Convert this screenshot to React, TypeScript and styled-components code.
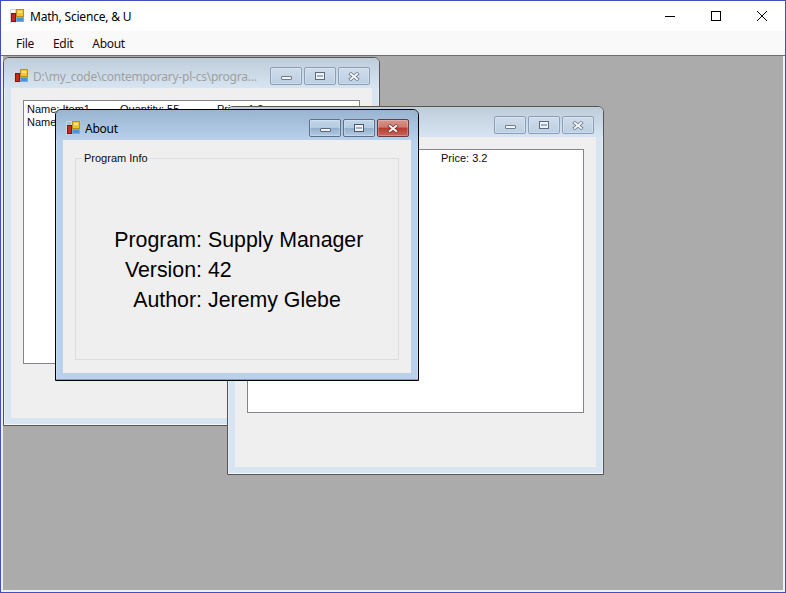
import React from "react";
import styled, { createGlobalStyle } from "styled-components";

const Global = createGlobalStyle`
  html, body { margin: 0; padding: 0; background: #fff; }
  * { box-sizing: border-box; }
`;

const uiFont = `"Noto Sans", "Open Sans", sans-serif`;

const MainWindow = styled.div`
  width: 786px;
  height: 593px;
  border: 1px solid #3f51c0;
  background: #fff;
  display: flex;
  flex-direction: column;
  overflow: hidden;
  font-family: ${uiFont};
  font-size: 12px;
  color: #000;
`;

const MainTitleBar = styled.div`
  height: 30px;
  flex: none;
  display: flex;
  align-items: center;
  padding-left: 8px;
  background: #fff;
`;

const MainTitle = styled.span`
  flex: 1;
  margin-left: 5px;
  font-size: 12px;
  letter-spacing: -0.2px;
`;

const CaptionButton = styled.div`
  width: 46px;
  height: 30px;
  display: flex;
  align-items: center;
  justify-content: center;
`;

const MenuBar = styled.div`
  height: 25px;
  flex: none;
  display: flex;
  align-items: center;
  background: #f9f9f9;
  padding-left: 15px;
  gap: 19px;
  border-bottom: 1px solid #6e6e6e;
`;

const MenuItem = styled.span`
  font-size: 12px;
  letter-spacing: -0.3px;
  color: #1a0a0a;
`;

const MdiFrame = styled.div`
  flex: 1;
  min-height: 0;
  padding: 0 2px 2px 2px;
  background: #f0f0f0;
  display: flex;
`;

const MdiArea = styled.div`
  flex: 1;
  position: relative;
  background: #ababab;
`;

const ChildWindow = styled.div<{ $x: number; $y: number; $w: number; $h: number; $active?: boolean }>`
  position: absolute;
  left: ${(p) => p.$x}px;
  top: ${(p) => p.$y}px;
  width: ${(p) => p.$w}px;
  height: ${(p) => p.$h}px;
  display: flex;
  flex-direction: column;
  padding: 0 7px 7px 7px;
  border: 1px solid ${(p) => (p.$active ? "#000" : "#555")};
  border-radius: 6px 6px 0 0;
  background: ${(p) => (p.$active ? "#b9d1ea" : "#d7e4f2")};
  box-shadow: inset 0 -1px 0 ${(p) => (p.$active ? "#2fc3e0" : "#f4f8fb")},
    inset 1px 0 0 ${(p) => (p.$active ? "#c9dcf0" : "#e6eef7")},
    inset -1px 0 0 ${(p) => (p.$active ? "#c9dcf0" : "#e6eef7")};
`;

const ChildTitleBar = styled.div<{ $active?: boolean }>`
  height: 30px;
  flex: none;
  margin: 0 -7px;
  padding: 6px 9px 0 9px;
  display: flex;
  align-items: center;
  border-radius: 5px 5px 0 0;
  background: linear-gradient(
    to bottom,
    ${(p) => (p.$active ? "#99b4d1, #b9d1ea" : "#bfcddb, #d7e4f2")}
  );
`;

const ChildTitle = styled.span<{ $active?: boolean }>`
  flex: 1;
  margin-left: 4px;
  font-size: 12px;
  letter-spacing: -0.23px;
  white-space: nowrap;
  overflow: hidden;
  color: ${(p) => (p.$active ? "#000" : "#a0a0a0")};
`;

const ButtonRow = styled.div`
  display: flex;
  gap: 2px;
`;

const FrameButton = styled.div<{ $kind: "plain" | "active" | "close" }>`
  width: 32px;
  height: 18px;
  display: flex;
  align-items: center;
  justify-content: center;
  border-radius: 2px;
  border: 1px solid ${(p) => (p.$kind === "plain" ? "#8c9db8" : p.$kind === "close" ? "#6e3a42" : "#5f6f8c")};
  background: ${(p) =>
    p.$kind === "plain"
      ? "linear-gradient(to bottom, #d0dcea, #bccfe3)"
      : p.$kind === "active"
      ? "linear-gradient(to bottom, #c3d6ea 0%, #b4cae0 50%, #94b0cc 52%, #b3cbe3 100%)"
      : "linear-gradient(to bottom, #d9938a 0%, #cf7a70 45%, #b53b2c 50%, #c9675a 100%)"};
  box-shadow: inset 0 0 0 1px rgba(255, 255, 255, 0.25);
`;

const ChildContent = styled.div<{ $pad: string }>`
  flex: 1;
  min-height: 0;
  background: #efefef;
  display: flex;
  flex-direction: column;
  padding: ${(p) => p.$pad};
`;

const ListBox = styled.div`
  flex: 1;
  background: #fff;
  border: 1px solid #82868c;
  padding: 2px 3px;
  overflow: hidden;
`;

const ListRow = styled.div`
  display: flex;
  height: 13px;
  font-family: "Liberation Sans", Arial, sans-serif;
  font-size: 11px;
  line-height: 13px;
  color: #0a0a14;
  white-space: nowrap;
`;

const ListCell = styled.span<{ $w: number }>`
  width: ${(p) => p.$w}px;
  flex: none;
`;

const GroupBox = styled.fieldset`
  flex: 1;
  min-height: 0;
  min-width: 0;
  margin: 0;
  padding: 61px 0 0 0;
  border: 1px solid #dcdcdc;
`;

const GroupLegend = styled.legend`
  margin-left: 6px;
  padding: 0 2px;
  font-family: "Liberation Sans", Arial, sans-serif;
  font-size: 11px;
  line-height: 12px;
  white-space: nowrap;
  color: #0a0a14;
`;

const InfoGrid = styled.div`
  display: grid;
  grid-template-columns: 126px auto;
  column-gap: 6px;
  grid-auto-rows: 30px;
  align-items: center;
  font-family: "Liberation Sans", Arial, sans-serif;
  font-size: 21.33px;
  color: #000;
`;

const InfoLabel = styled.span`
  text-align: right;
`;

const InfoValue = styled.span`
  white-space: nowrap;
`;

const AppIcon = () => (
  <svg width="16" height="16" viewBox="0 0 16 16" style={{ flex: "none" }}>
    <path d="M1.5 1 V15.5 M1 1.5 H15.5 M6.5 1 V15" stroke="#d4d4d4" strokeWidth="1" fill="none" />
    <rect x="7.5" y="1.5" width="7" height="7" fill="#f4c430" stroke="#b8901c" />
    <rect x="9" y="3" width="4" height="2" fill="#fbe68a" />
    <rect x="2.5" y="5.5" width="4" height="8" fill="#c8281e" stroke="#7a1a14" />
    <rect x="7.5" y="9.5" width="7" height="4" fill="#4f8fe0" stroke="#7aa8e0" />
  </svg>
);

const MinGlyph = ({ dim }: { dim?: boolean }) => (
  <svg width="11" height="4" viewBox="0 0 11 4" style={{ marginTop: 4 }}>
    <rect x="0.5" y="0.5" width="10" height="3" rx="0.5" fill="#f2f4f7" stroke={dim ? "#6f7b8c" : "#5a6680"} />
  </svg>
);

const MaxGlyph = ({ dim }: { dim?: boolean }) => (
  <svg width="10" height="8" viewBox="0 0 10 8">
    <rect x="0.5" y="0.5" width="9" height="7" fill="#eef1f5" stroke={dim ? "#5f6b7d" : "#4a5668"} />
    <rect x="2" y="3" width="6" height="2" fill="#a0b2c8" />
  </svg>
);

const CloseGlyph = ({ edge }: { edge: string }) => (
  <svg width="12" height="9" viewBox="0 0 12 9">
    <path d="M1.5 1 L10.5 8 M10.5 1 L1.5 8" stroke={edge} strokeWidth="3.4" fill="none" />
    <path d="M2 1.2 L10 7.8 M10 1.2 L2 7.8" stroke="#f6f8fa" strokeWidth="2" fill="none" />
  </svg>
);

const FrameButtons = ({ active }: { active?: boolean }) => (
  <ButtonRow>
    <FrameButton $kind={active ? "active" : "plain"}>
      <MinGlyph dim={!active} />
    </FrameButton>
    <FrameButton $kind={active ? "active" : "plain"}>
      <MaxGlyph dim={!active} />
    </FrameButton>
    <FrameButton $kind={active ? "close" : "plain"}>
      <CloseGlyph edge={active ? "#6a2a2a" : "#5f6b7d"} />
    </FrameButton>
  </ButtonRow>
);

export default function App() {
  return (
    <MainWindow>
      <Global />
      <MainTitleBar>
        <AppIcon />
        <MainTitle>Math, Science, &amp; U</MainTitle>
        <CaptionButton>
          <svg width="10" height="10" viewBox="0 0 10 10">
            <path d="M0 5.5 H10" stroke="#000" strokeWidth="1" />
          </svg>
        </CaptionButton>
        <CaptionButton>
          <svg width="10" height="10" viewBox="0 0 10 10">
            <rect x="0.5" y="0.5" width="9" height="9" fill="none" stroke="#000" />
          </svg>
        </CaptionButton>
        <CaptionButton>
          <svg width="10" height="10" viewBox="0 0 10 10">
            <path d="M0 0 L10 10 M10 0 L0 10" stroke="#000" strokeWidth="1" />
          </svg>
        </CaptionButton>
      </MainTitleBar>
      <MenuBar>
        <MenuItem>File</MenuItem>
        <MenuItem>Edit</MenuItem>
        <MenuItem>About</MenuItem>
      </MenuBar>
      <MdiFrame>
        <MdiArea>
          <ChildWindow $x={0} $y={1} $w={377} $h={369}>
            <ChildTitleBar>
              <AppIcon />
              <ChildTitle>D:\my_code\contemporary-pl-cs\progra...</ChildTitle>
              <FrameButtons />
            </ChildTitleBar>
            <ChildContent $pad="12px 12px 54px 12px">
              <ListBox>
                <ListRow>
                  <ListCell $w={93}>Name: Item1</ListCell>
                  <ListCell $w={97}>Quantity: 55</ListCell>
                  <ListCell $w={80}>Price: 1.2</ListCell>
                </ListRow>
                <ListRow>
                  <ListCell $w={93}>Name: Item2</ListCell>
                </ListRow>
              </ListBox>
            </ChildContent>
          </ChildWindow>
          <ChildWindow $x={224} $y={50} $w={377} $h={369}>
            <ChildTitleBar>
              <AppIcon />
              <ChildTitle />
              <FrameButtons />
            </ChildTitleBar>
            <ChildContent $pad="12px 12px 54px 12px">
              <ListBox>
                <ListRow>
                  <ListCell $w={93}>Name: Item3</ListCell>
                  <ListCell $w={97}>Quantity: 12</ListCell>
                  <ListCell $w={80}>Price: 3.2</ListCell>
                </ListRow>
              </ListBox>
            </ChildContent>
          </ChildWindow>
          <ChildWindow $x={52} $y={53} $w={364} $h={272} $active>
            <ChildTitleBar $active>
              <AppIcon />
              <ChildTitle $active>About</ChildTitle>
              <FrameButtons active />
            </ChildTitleBar>
            <ChildContent $pad="12px 12px 13px 12px">
              <GroupBox>
                <GroupLegend>Program Info</GroupLegend>
                <InfoGrid>
                  <InfoLabel>Program:</InfoLabel>
                  <InfoValue>Supply Manager</InfoValue>
                  <InfoLabel>Version:</InfoLabel>
                  <InfoValue>42</InfoValue>
                  <InfoLabel>Author:</InfoLabel>
                  <InfoValue>Jeremy Glebe</InfoValue>
                </InfoGrid>
              </GroupBox>
            </ChildContent>
          </ChildWindow>
        </MdiArea>
      </MdiFrame>
    </MainWindow>
  );
}
